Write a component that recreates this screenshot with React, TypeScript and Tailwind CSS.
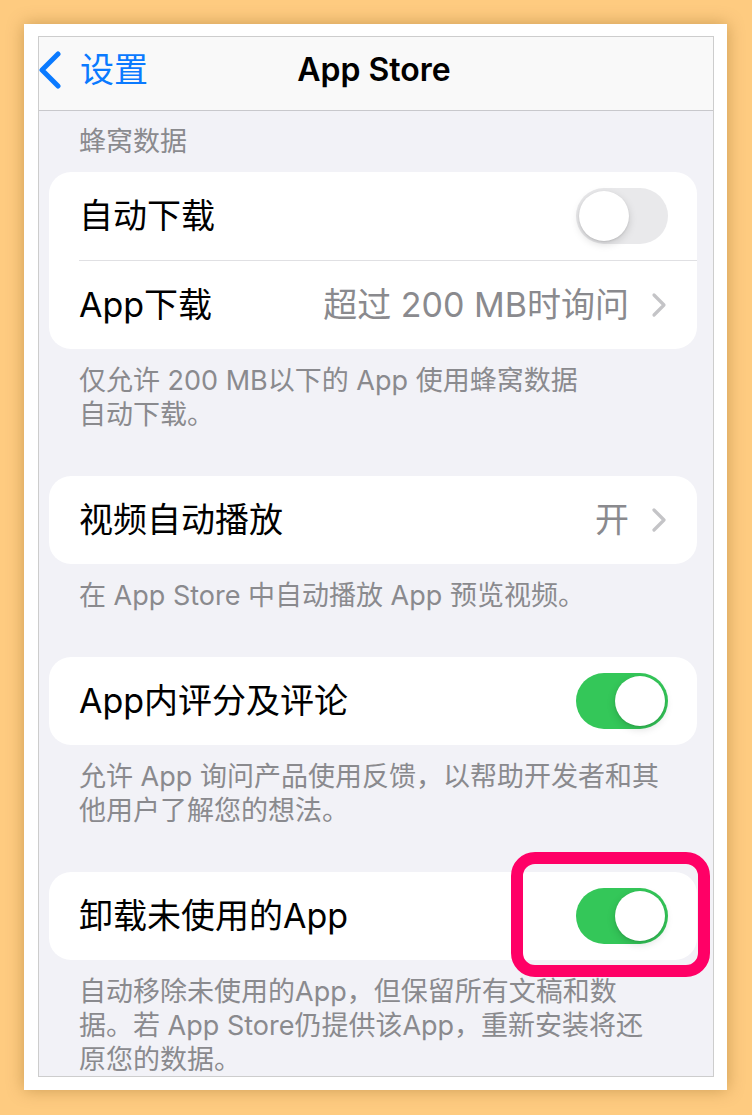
import React from 'react';

const font = { fontFamily: 'Inter, "Noto Sans CJK SC", sans-serif' };

// 返回箭头
const BackChevron = () => (
  <svg width="24" height="38" viewBox="0 0 24 38" fill="none">
    <polyline points="20,3 4,19 20,35" stroke="#0A7AFF" strokeWidth="5" strokeLinecap="round" strokeLinejoin="round" />
  </svg>
);

// 右侧小箭头
const Disclosure = () => (
  <svg width="16" height="26" viewBox="0 0 16 26" fill="none">
    <polyline points="3,3 13,13 3,23" stroke="#C4C4C7" strokeWidth="3.2" strokeLinecap="round" strokeLinejoin="round" />
  </svg>
);

const Toggle: React.FC<{ on: boolean }> = ({ on }) => (
  <div
    className={
      on
        ? 'w-[92px] h-[56px] rounded-full bg-[#34C759] flex items-center justify-end px-[3px]'
        : 'w-[92px] h-[56px] rounded-full bg-[#E9E9EB] flex items-center justify-start px-[3px]'
    }
  >
    <div className="w-[50px] h-[50px] rounded-full bg-white shadow-[0_3px_8px_rgba(0,0,0,0.15),0_1px_2px_rgba(0,0,0,0.1)]" />
  </div>
);

const Row: React.FC<{ label: string; children?: React.ReactNode }> = ({ label, children }) => (
  <div className="h-[88px] flex items-center justify-between pl-[30px] pr-[29px]">
    <span className="text-[34px] text-black leading-none">{label}</span>
    {children}
  </div>
);

const Value: React.FC<{ text: string }> = ({ text }) => (
  <div className="flex items-center gap-[22px] pr-[1px]">
    <span className="text-[34px] text-[#8A8A8E] leading-none">{text}</span>
    <Disclosure />
  </div>
);

const Footer: React.FC<{ lines: string[] }> = ({ lines }) => (
  <div className="pl-[40px] pt-[15px] pb-[44px] text-[27px] leading-[34px] text-[#8A8A8E]">
    {lines.map((l, i) => (
      <div key={i}>{l}</div>
    ))}
  </div>
);

const App: React.FC = () => {
  return (
    <div className="w-[752px] h-[1115px] bg-[#FECB80] pt-[24px] pl-[24px]" style={font}>
      <div className="w-[703px] h-[1066px] bg-white pt-[12px] pl-[14px] shadow-[0_0_16px_rgba(110,70,0,0.35)]">
        <div className="w-[676px] h-[1041px] border border-[#CDCDCD] bg-[#F2F2F7] overflow-hidden">
          {/* 导航栏 */}
          <div className="h-[74px] pb-[8px] bg-[#F9F9F9] border-b border-[#C8C8CC] grid grid-cols-[1fr_auto_1fr] items-center">
            <div className="flex items-center gap-[18px] -ml-[1px]">
              <BackChevron />
              <span className="text-[34px] text-[#0A7AFF] leading-none">设置</span>
            </div>
            <div className="text-[32px] font-semibold text-black leading-none -ml-[4px]">App Store</div>
            <div />
          </div>

          {/* 蜂窝数据 */}
          <div className="pl-[40px] pt-[14px] pb-[13px] text-[27px] leading-[34px] text-[#8A8A8E]">蜂窝数据</div>
          <div className="ml-[10px] w-[648px] bg-white rounded-[22px]">
            <Row label="自动下载">
              <Toggle on={false} />
            </Row>
            <div className="ml-[30px] h-px bg-[#E0E0E3]" />
            <Row label="App下载">
              <Value text="超过 200 MB时询问" />
            </Row>
          </div>
          <Footer lines={['仅允许 200 MB以下的 App 使用蜂窝数据', '自动下载。']} />

          <div className="ml-[10px] w-[648px] bg-white rounded-[22px]">
            <Row label="视频自动播放">
              <Value text="开" />
            </Row>
          </div>
          <Footer lines={['在 App Store 中自动播放 App 预览视频。']} />

          <div className="ml-[10px] w-[648px] bg-white rounded-[22px]">
            <Row label="App内评分及评论">
              <Toggle on={true} />
            </Row>
          </div>
          <Footer lines={['允许 App 询问产品使用反馈，以帮助开发者和其', '他用户了解您的想法。']} />

          <div className="ml-[10px] w-[648px] bg-white rounded-[22px] relative">
            <Row label="卸载未使用的App">
              <Toggle on={true} />
            </Row>
            {/* 高亮框 */}
            <div className="absolute left-[462px] top-[-20px] w-[199px] h-[125px] border-[12px] border-[#FF0066] rounded-[24px]" />
          </div>
          <Footer
            lines={[
              '自动移除未使用的App，但保留所有文稿和数',
              '据。若 App Store仍提供该App，重新安装将还',
              '原您的数据。',
            ]}
          />
        </div>
      </div>
    </div>
  );
};

export default App;
